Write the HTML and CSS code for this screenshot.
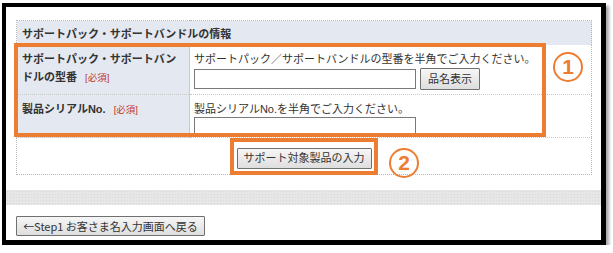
FILE: index.html
```html
<!DOCTYPE html>
<html lang="ja">
<head>
    <meta charset="UTF-8">
    <meta name="viewport" content="width=device-width, initial-scale=1.0">
    <title>サポートパック・サポートバンドルの情報</title>
    <link rel="stylesheet" href="styles.css">
</head>
<body>
    <div class="shot">
        <div class="frame">
            <!-- Product form -->
            <div class="form-wrap">
                <table class="info">
                    <tr>
                        <th colspan="2" class="head">サポートパック・サポートバンドルの情報</th>
                    </tr>
                    <tr class="row-model">
                        <th class="label">サポートパック・サポートバンドルの型番 <span class="req">[必須]</span></th>
                        <td class="value">
                            <p class="hint">サポートパック／サポートバンドルの型番を半角でご入力ください。</p>
                            <div class="inputs">
                                <input type="text" class="field">
                                <button class="btn btn-name">品名表示</button>
                            </div>
                        </td>
                    </tr>
                    <tr class="row-serial">
                        <th class="label">製品シリアルNo. <span class="req">[必須]</span></th>
                        <td class="value">
                            <p class="hint">製品シリアルNo.を半角でご入力ください。</p>
                            <div class="inputs">
                                <input type="text" class="field">
                            </div>
                        </td>
                    </tr>
                    <tr class="row-submit">
                        <td colspan="2" class="submit">
                            <button class="btn">サポート対象製品の入力</button>
                        </td>
                    </tr>
                </table>
            </div>

            <div class="band"></div>

            <div class="back">
                <button class="btn btn-back">←Step1 お客さま名入力画面へ戻る</button>
            </div>

            <!-- Annotations -->
            <div class="mark mark-fields"></div>
            <div class="mark mark-submit"></div>
            <span class="num num-1">1</span>
            <span class="num num-2">2</span>
        </div>
    </div>
</body>
</html>
```

FILE: styles.css
```css
/* Global */
body, html {
    margin: 0;
    padding: 0;
    background: #fff;
    font-family: 'Liberation Sans', 'Noto Sans CJK JP', sans-serif;
    color: #333;
    font-size: 11px;
}

.shot {
    padding: 3px 0 0 2px;
}

.frame {
    position: relative;
    width: 595px;
    height: 233px;
    border-style: solid;
    border-color: #000;
    border-width: 4px 5px 5px 4px;
    background: #fff;
    box-shadow: 3px 3px 3px rgba(0, 0, 0, 0.35);
    overflow: hidden;
}

/* Form table */
.form-wrap {
    padding: 13px 9px 0 10px;
}

.info {
    width: 576px;
    border-collapse: collapse;
    border: 1px dotted #b8b8b8;
}

.info th,
.info td {
    padding: 0;
    text-align: left;
    vertical-align: top;
}

.head {
    height: 23px;
    background: #e4e8f1;
    font-weight: bold;
    padding: 1px 5px 0 !important;
    vertical-align: middle !important;
    line-height: 22px;
}

.label {
    width: 158px;
    padding: 5px 9px 0 5px !important;
    background: #e4e8f1;
    font-weight: bold;
    line-height: 18px;
    border-right: 1px solid #c9c9c9;
    border-bottom: 1px dotted #c8c8c8;
}

.req {
    color: #c0392b;
    font-weight: normal;
    font-size: 9.5px;
    line-height: 1;
    margin-left: 5px;
}

.value {
    padding: 6px 0 0 4px !important;
    border-bottom: 1px dotted #c8c8c8;
}

.row-model .label,
.row-model .value {
    height: 43px;
}

.row-serial .label,
.row-serial .value {
    height: 36px;
}

.hint {
    margin: 0;
    line-height: 16px;
}

.inputs {
    display: flex;
    align-items: center;
    gap: 4px;
    margin-top: 1px;
}

.row-serial .inputs {
    margin-top: 0;
}

.field {
    box-sizing: border-box;
    width: 222px;
    height: 20px;
    margin: 0;
    border: 1px solid #7a7a7a;
    background: #fff;
}

/* Buttons */
.btn {
    box-sizing: border-box;
    height: 21px;
    padding: 0 6px;
    border: 1px solid #707070;
    border-radius: 1px;
    background: linear-gradient(#f6f6f6, #dedede);
    color: #333;
    font-family: 'Liberation Sans', 'Noto Sans CJK JP', sans-serif;
    font-size: 11px;
    line-height: 19px;
    white-space: nowrap;
}

.btn-name {
    width: 60px;
    height: 22px;
}

.submit {
    height: 32px;
    text-align: center !important;
    vertical-align: middle !important;
    padding-top: 4px !important;
}

.submit .btn {
    min-width: 135px;
}

/* Grey band and back link */
.band {
    margin-top: 15px;
    height: 15px;
    background-color: #e6e6e6;
    background-image: radial-gradient(#d8d8d8 0.6px, transparent 0.8px);
    background-size: 3px 3px;
}

.back {
    padding: 11px 10px 0;
}

.btn-back {
    min-width: 189px;
    height: 20px;
    font-family: 'Noto Sans CJK JP', sans-serif;
}

/* Orange annotations */
.mark {
    position: absolute;
    box-sizing: border-box;
    border: 4px solid #ed7d31;
}

.mark-fields {
    left: 8px;
    top: 36px;
    width: 532px;
    height: 94px;
}

.mark-submit {
    left: 224px;
    top: 131px;
    width: 148px;
    height: 37px;
}

.num {
    position: absolute;
    box-sizing: border-box;
    width: 30px;
    height: 30px;
    border: 2.5px solid #ed7d31;
    border-radius: 50%;
    color: #ed7d31;
    font-family: 'Liberation Sans', sans-serif;
    font-size: 21px;
    font-weight: bold;
    line-height: 25px;
    text-align: center;
}

.num-1 {
    left: 547px;
    top: 45px;
}

.num-2 {
    left: 383px;
    top: 141px;
}
```
